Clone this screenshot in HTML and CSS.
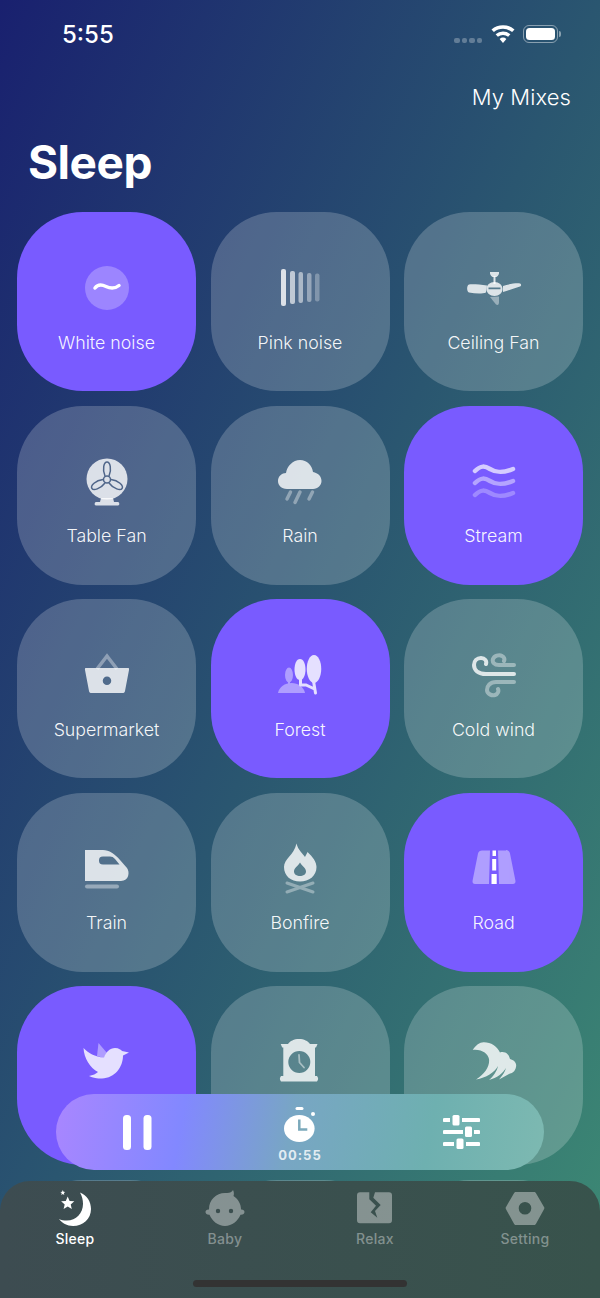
FILE: index.html
```html
<!DOCTYPE html>
<html>
<head>
    <title>Sleep</title>
    <link rel="stylesheet" href="styles.css">
</head>
<body>
    <div class="screen">
        <div class="status">
            <span class="time">5:55</span>
            <div class="status-icons">
                <div class="signal"><i></i><i></i><i></i><i></i></div>
                <svg class="wifi" viewBox="0 0 24 18"><path d="M12 18l-3.4-4.1a5.4 5.4 0 0 1 6.8 0zM6.900 11.800L4.600 9.200a11.600 11.600 0 0 1 14.800 0l-2.300 2.600a8 8 0 0 0-10.200 0zM2.900 7.100L.5 4.400a17.800 17.800 0 0 1 23 0l-2.400 2.700a14.200 14.200 0 0 0-18.200 0z"/></svg>
                <div class="battery"><div class="battery-fill"></div></div>
                <div class="battery-nub"></div>
            </div>
        </div>

        <div class="mixes">My Mixes</div>
        <h1>Sleep</h1>

        <div class="grid">
            <div class="tile on">
                <svg class="icon" viewBox="0 0 44 44"><circle class="disc" cx="22" cy="22" r="22"/><path class="wave-line" d="M10 22c3-4 7-3.500 11-1.500s8 3 13-1"/></svg>
                <span>White noise</span>
            </div>
            <div class="tile">
                <svg class="icon" viewBox="0 0 44 44"><rect x="3" y="3" width="5" height="37" rx="2"/><rect x="12" y="5" width="5" height="33" rx="2" opacity=".8"/><rect x="20.500" y="6" width="4.500" height="31" rx="2" opacity=".65"/><rect x="29" y="7" width="4.500" height="29" rx="2" opacity=".5"/><rect x="37" y="7.500" width="4.500" height="28" rx="2" opacity=".35"/></svg>
                <span>Pink noise</span>
            </div>
            <div class="tile">
                <svg class="icon" viewBox="0 0 44 44"><path d="M18 6h9v1.500c0 1.500-2 3-2.500 3.500h-4C20 10.500 18 9 18 7.500z"/><rect x="21.500" y="10" width="2" height="8"/><path fill-rule="evenodd" d="M22.500 16c4.500 0 8 3 8 7s-3.500 7-8 7-8-3-8-7 3.500-7 8-7zM16.500 21.500v1.800h12v-1.800z"/><path d="M15 19.500C8 18.500 0 18-3 18.500c-2.500 1-2.500 7 0 8 6 1 13 1.500 17 0zM31 20c6-2 13-3 17-2.500 1.500.5 1.500 2.500 0 3-6 1.500-12 4.500-17 5.500z"/><path class="dim" d="M18 31c2 2.500 4 5 6 7.500 2 1 3 0 3-2.500v-5.500z"/></svg>
                <span>Ceiling Fan</span>
            </div>

            <div class="tile">
                <svg class="icon" viewBox="0 0 44 44"><ellipse cx="22" cy="19" rx="20.500" ry="20.500"/><path d="M16 38h12l1 4h4c1.500 0 2 3.500 0 3.500H11c-2 0-1.500-3.500 0-3.500h4z"/><g class="blades"><path d="M20 16c-3-7-1-14 2-14s5 7 2 14"/><path d="M20 16c-3-7-1-14 2-14s5 7 2 14" transform="rotate(120 22 19.500)"/><path d="M20 16c-3-7-1-14 2-14s5 7 2 14" transform="rotate(240 22 19.500)"/><circle cx="22" cy="19.500" r="3.500"/></g></svg>
                <span>Table Fan</span>
            </div>
            <div class="tile">
                <svg class="icon" viewBox="0 0 44 44"><path d="M9 29c-6 0-9-4-9-8 0-5 4-8 8-8 1-7 7-13 14-13s12 5 13 12c5 1 8.500 4 8.500 9 0 4-3.500 8-8.500 8z"/><path class="drops" d="M12.500 32L9 39M22 32l-5 10.500M34.500 32L31 39"/></svg>
                <span>Rain</span>
            </div>
            <div class="tile on">
                <svg class="icon" viewBox="0 0 44 44"><path class="swell" d="M3 11c6-6 10-5 15-2s11 5 23 0"/><path class="swell mid" d="M3 23c6-6 10-5 15-2s11 5 23 0"/><path class="swell low" d="M3 35c6-6 10-5 15-2s11 5 23 0"/></svg>
                <span>Stream</span>
            </div>

            <div class="tile">
                <svg class="icon" viewBox="0 0 44 44"><path class="handle" d="M12 16l10-13 10 13"/><path fill-rule="evenodd" d="M1 15h42c1 0 1.200.5 1 2l-4 21c-.3 1.400-1 2-2.500 2h-31C5 40 4.300 39.400 4 38L0 17c-.2-1.500 0-2 1-2zM22 23.500a4 4 0 1 0 0 8.500 4 4 0 0 0 0-8.500z"/></svg>
                <span>Supermarket</span>
            </div>
            <div class="tile on">
                <svg class="icon" viewBox="0 0 44 44"><g class="dim"><ellipse cx="11" cy="22" rx="4" ry="7.500"/><rect x="10" y="28" width="2" height="4"/><path d="M0 40c1-6 7-10 13.500-10S26 34 27 40z"/></g><path d="M36 2c4.500 0 7.250 7 7.250 14S40 30 36 30s-7.250-7-7.250-14S31.500 2 36 2z"/><path d="M22 6c3.500 0 5.500 5 5.500 10.500S25.500 27 22 27s-5.500-5-5.500-10.500S18.500 6 22 6z"/><path class="trunk" d="M35.500 28l2 12M36.500 36L28 32l-5.500 0M22.500 26v6"/></svg>
                <span>Forest</span>
            </div>
            <div class="tile">
                <svg class="icon" viewBox="0 0 44 44"><path class="gust" d="M42 21H14C6 21 2 17 2 12c0-4 3-7 7-7s6 3 5 6"/><path class="gust dimline" d="M42 12H27c-5 0-7-3-6-6s6-5 9-3c2 1 3 3 2 5"/><path class="gust dimline" d="M42 29H24c-6 0-9 4-9 8s5 6 8 5 4-4 3-6"/></svg>
                <span>Cold wind</span>
            </div>

            <div class="tile">
                <svg class="icon" viewBox="0 0 44 44"><path fill-rule="evenodd" d="M0 3h18c6 0 12 4 17 10l7 8c3 4 2 13-6 13H0zM18 9.500c-3 0-4 1.500-4 4s1 4 4 4h16.500L30 12c-1.500-1.700-3-2.500-5-2.500z"/><rect class="dim" y="37.500" width="34" height="4" rx="2"/></svg>
                <span>Train</span>
            </div>
            <div class="tile">
                <svg class="icon" viewBox="0 0 44 44"><path fill-rule="evenodd" d="M18.500-3.500C20 3 25 7 27 10c1-2 2-4 2.500-5C35 10 38.500 15 38.500 20c0 9-7.500 14.500-16.500 14.500S6 29 6 20C6 12 16 8 18.500-3.500zM22 15.500c-2 3.500-6 5.500-6 9 0 3 3 4.500 6 4.500s6-1.500 6-4.500c0-3.500-4-5.500-6-9z"/><path class="logs" d="M9 36l26 9M35 36L9 45"/></svg>
                <span>Bonfire</span>
            </div>
            <div class="tile on">
                <svg class="icon" viewBox="0 0 44 44"><g class="dim"><path d="M10 3.500h8l-1 33.500H3C1 37 .2 35.500.6 33.500L6 6.500C6.500 4.500 8 3.500 10 3.500z"/><path d="M34 3.500h-8l1 33.500h14c2 0 2.800-1.500 2.400-3.500L38 6.500c-.5-2-2-3.500-4-3.500z"/></g><path class="dash" d="M20.500 3.500h3.500V9h-3.500zM20.200 12h4v11.500h-4zM19.500 27h5.200v10h-5.200z"/></svg>
                <span>Road</span>
            </div>

            <div class="tile on">
                <svg class="icon" viewBox="0 0 44 44"><path class="dim" d="M13.500 3L22 13l-3 5-7-2z"/><path d="M-1.500 8C3 13 10 17 19 17.500 21 12 25 8 30 8c4 0 6 2 7 3l7 1.500-6 3c0 11.500-8 22.500-21 23-5 0-9-.5-13-2.500 4-1 7-2 9-4C5 28-1 18-1.500 8z"/></svg>
                <span>Birds</span>
            </div>
            <div class="tile">
                <svg class="icon" viewBox="0 0 44 44"><path fill-rule="evenodd" d="M21-1c5 0 9 2 11 5h7.500L38 7.500h-1V36h2c1.500 2 1.500 3.500 0 5.500H3c-1.500-2-1.500-3.500 0-5.500h2.300V7.500H4.200L2.700 4H10c2-3 6-5 11-5zM21.300 11a11 11 0 1 0 0 22 11 11 0 0 0 0-22z"/><path class="hand" d="M21 15l.5 7.500 4.500 5"/></svg>
                <span>Clock</span>
            </div>
            <div class="tile">
                <svg class="icon" viewBox="0 0 44 44"><path d="M.7 10C4 5 8 2 12 2.300c7 .2 13 3.700 16 10.200 5-1.500 9 1.500 10 6.500 4 1 7 4 6 8-1 5-4 6-7 7l-10 5.500c3-3.500 6-7.500 7-11.500-3 5-9 10-17 12 4-3 8-9 9-14-3 6-12 12-22 13.500C13 34 18 26 17 19 16 14 10 9 .7 10z"/></svg>
                <span>Waves</span>
            </div>

            <div class="tile"></div>
            <div class="tile"></div>
            <div class="tile"></div>
        </div>

        <div class="player">
            <svg class="pause" viewBox="0 0 29 35"><rect width="8" height="35" rx="3.500"/><rect x="20.500" width="8" height="35" rx="3.500"/></svg>
            <div class="timer">
                <svg class="timer-icon" viewBox="0 0 36 36"><rect x="13.500" y="0" width="8" height="3" rx="1.500"/><circle cx="31" cy="7" r="2"/><ellipse cx="17.300" cy="21.500" rx="15.300" ry="13.500"/><path class="timer-hand" d="M17.300 12.500v10h8"/></svg>
                <span>00:55</span>
            </div>
            <svg class="sliders" viewBox="0 0 37 34"><path d="M1.500 3H7v4H1.500a2 2 0 0 1 0-4zM19 3h16.500a2 2 0 0 1 0 4H19zM1.500 15H20v4H1.500a2 2 0 0 1 0-4zM31 15h4.500a2 2 0 0 1 0 4H31zM1.500 27H11v4H1.500a2 2 0 0 1 0-4zM23 27h12.500a2 2 0 0 1 0 4H23z"/><rect x="9.500" y="0" width="7" height="10.500" rx="1.500"/><rect x="22" y="11.500" width="7" height="10.500" rx="1.500"/><rect x="13.500" y="23.500" width="7" height="10.500" rx="1.500"/></svg>
        </div>

        <div class="tabbar">
            <div class="tabs">
                <div class="tab active">
                    <svg class="tab-icon" viewBox="0 0 44 38"><path d="M27 2.500C34 5 38 12 38 19c0 10-8 17-18 17-6 0-11-3-14-7 2 1 5 1.500 8 1.500 9 0 16-7.500 16-16.500 0-4-1-8-3-11.500z"/><path d="M14.700 6.500l1.900 4.400 4.700.4-3.600 3.100 1.100 4.600-4.100-2.400-4.100 2.400 1.100-4.600-3.600-3.100 4.700-.4zM9.800 0l.7 1.700 1.800.2-1.400 1.200.4 1.800-1.500-1-1.500 1 .4-1.800L7.300 1.900l1.800-.2z"/></svg>
                    <span>Sleep</span>
                </div>
                <div class="tab">
                    <svg class="tab-icon" viewBox="0 0 44 38"><path fill-rule="evenodd" d="M24 3c3 0 5-1 6-3 1 2 1.200 4 .5 6C35 9 38 14 38 19v.5c2-.3 3.500 1 3.500 2.500s-1.500 3-4 2.800C35 31 29 36 22 36S9 31 6.500 24.800c-2.500.2-4-1.300-4-2.800s1.500-2.800 3.500-2.500V19C6 10 13 3 22 3zM15 18.800a2.200 2.200 0 1 0 0 4.400 2.200 2.200 0 0 0 0-4.400zM28 18.800a2.200 2.200 0 1 0 0 4.400 2.200 2.200 0 0 0 0-4.400z"/></svg>
                    <span>Baby</span>
                </div>
                <div class="tab">
                    <svg class="tab-icon" viewBox="0 0 44 38"><path fill-rule="evenodd" d="M7 2.300h9.300L16.300 9.300 23 15.700 17.700 22.300 24.300 27.700 22 21 27.700 15 20.300 7.700 22 2.300H36c2 0 3 1 3 3v25c0 2-1 3-3 3H7c-2 0-3-1-3-3v-25c0-2 1-3 3-3z"/></svg>
                    <span>Relax</span>
                </div>
                <div class="tab">
                    <svg class="tab-icon" viewBox="0 0 44 38"><path fill-rule="evenodd" d="M13 2h18c1 0 1.500.4 2 1.200l8 13.800c.5.800.5 1.400 0 2.200l-8 14.600c-.5.800-1 1.200-2 1.200H13c-1 0-1.500-.4-2-1.200L3 19.200c-.5-.8-.5-1.400 0-2.200l8-13.800C11.500 2.400 12 2 13 2zM22 12a6.300 6.300 0 1 0 0 12.600A6.300 6.300 0 0 0 22 12z"/></svg>
                    <span>Setting</span>
                </div>
            </div>
            <div class="home-bar"></div>
        </div>
    </div>
</body>
</html>
```

FILE: styles.css
```css
body {
    margin: 0;
    padding: 0;
}

.screen {
    position: relative;
    width: 600px;
    height: 1298px;
    overflow: hidden;
    font-family: Inter, "Noto Sans", sans-serif;
    color: white;
    background: linear-gradient(to bottom right, #19206f 0%, #2a5670 50%, #3d8a74 100%);
}

.status {
    display: flex;
    justify-content: space-between;
    height: 82px;
    padding: 0 39px 0 62px;
}

.time {
    margin-top: 20px;
    font-size: 24px;
    line-height: 30px;
    font-weight: 500;
}

.status-icons {
    display: flex;
    align-items: flex-start;
    padding-top: 25px;
}

.signal {
    display: flex;
    gap: 2px;
    margin: 13px 9px 0 0;
}

.signal i {
    width: 5.500px;
    height: 5px;
    border-radius: 2px;
    background: rgba(255,255,255,0.28);
}

.wifi {
    width: 24px;
    height: 18px;
    margin-right: 8px;
    fill: white;
}

.battery {
    width: 35px;
    height: 18px;
    box-sizing: border-box;
    padding: 2px;
    border: 1px solid rgba(255,255,255,0.45);
    border-radius: 6px;
}

.battery-fill {
    height: 100%;
    border-radius: 3.500px;
    background: white;
}

.battery-nub {
    width: 2px;
    height: 6px;
    margin: 6px 0 0 1px;
    border-radius: 0 2px 2px 0;
    background: rgba(255,255,255,0.45);
}

.mixes {
    padding-right: 29px;
    text-align: right;
    font-size: 22px;
    line-height: 30px;
    font-weight: 300;
    letter-spacing: 0.1px;
}

h1 {
    margin: 22px 0 0 28px;
    font-size: 46px;
    line-height: 56px;
    font-weight: 700;
    letter-spacing: -0.5px;
}

.grid {
    display: grid;
    grid-template-columns: repeat(3, 179px);
    grid-auto-rows: 179px;
    gap: 14.500px;
    margin-top: 22px;
    padding-left: 17px;
}

.tile {
    display: flex;
    flex-direction: column;
    align-items: center;
    padding-top: 54px;
    box-sizing: border-box;
    border-radius: 66px;
    background: rgba(255,255,255,0.2);
    color: rgba(255,255,255,0.8);
}

.tile.on {
    background: #795bff;
}

.tile span {
    margin-top: 20.500px;
    font-size: 17.800px;
    line-height: 24px;
    font-weight: 300;
    color: rgba(255,255,255,0.95);
}

.icon {
    display: block;
    width: 44px;
    height: 44px;
    overflow: visible;
    fill: currentColor;
}

.tile.on .icon {
    color: #e5e0ff;
}

.dim {
    opacity: 0.5;
}

.disc {
    opacity: 0.32;
}

.wave-line {
    fill: none;
    stroke: white;
    stroke-width: 3.500;
    stroke-linecap: round;
}

.blades {
    fill: none;
    stroke: #4f6589;
    stroke-width: 1.500;
}

.drops {
    fill: none;
    stroke: currentColor;
    stroke-width: 3.500;
    stroke-linecap: round;
    opacity: 0.45;
}

.swell {
    fill: none;
    stroke: currentColor;
    stroke-width: 4.500;
    stroke-linecap: round;
    opacity: 0.85;
}

.swell.mid {
    opacity: 0.55;
}

.swell.low {
    opacity: 0.35;
}

.handle {
    fill: none;
    stroke: currentColor;
    stroke-width: 3.500;
    opacity: 0.45;
}

.trunk {
    fill: none;
    stroke: currentColor;
    stroke-width: 3;
    stroke-linecap: round;
}

.gust {
    fill: none;
    stroke: currentColor;
    stroke-width: 4;
    stroke-linecap: round;
}

.dimline {
    opacity: 0.5;
}

.logs {
    fill: none;
    stroke: currentColor;
    stroke-width: 3;
    stroke-linecap: round;
    opacity: 0.45;
}

.dash {
    fill: white;
}

.hand {
    fill: none;
    stroke: currentColor;
    stroke-width: 1.800;
    stroke-linecap: round;
    opacity: 0.6;
}

/* floats over the grid */
.player {
    position: absolute;
    left: 56px;
    top: 1094px;
    display: grid;
    grid-template-columns: 163px 162px 161px;
    justify-items: center;
    align-items: center;
    width: 488px;
    height: 76px;
    border-radius: 38px;
    background: linear-gradient(100deg, #a986ff 0%, #8288ff 26%, #78a6c4 48%, #6eb0b0 76%, #7db9b1 100%);
}

.pause {
    width: 29px;
    height: 35px;
    fill: white;
}

.timer {
    display: flex;
    flex-direction: column;
    align-items: center;
}

.timer-icon {
    width: 36px;
    height: 36px;
    margin-top: 5px;
    fill: white;
}

.timer-hand {
    fill: none;
    stroke: #7ba9bb;
    stroke-width: 2.500;
}

.timer span {
    margin-top: 4px;
    font-size: 13px;
    line-height: 16px;
    font-weight: 700;
    letter-spacing: 1px;
    color: rgba(255,255,255,0.8);
}

.sliders {
    width: 37px;
    height: 34px;
    fill: white;
}

.tabbar {
    position: absolute;
    left: 0;
    top: 1181px;
    width: 600px;
    height: 117px;
    border-radius: 30px 30px 0 0;
    background: linear-gradient(90deg, #3d4c51, #38534c);
}

.tabs {
    display: grid;
    grid-template-columns: repeat(4, 150px);
}

.tab {
    display: flex;
    flex-direction: column;
    align-items: center;
    padding-top: 9px;
    font-size: 14px;
    line-height: 18px;
    font-weight: 500;
    letter-spacing: 0.3px;
    color: rgba(255,255,255,0.38);
}

.tab.active {
    color: white;
}

.tab-icon {
    display: block;
    width: 44px;
    height: 38px;
    margin-bottom: 2px;
    fill: currentColor;
}

.home-bar {
    width: 214px;
    height: 7px;
    margin: 32px auto 0;
    border-radius: 4px;
    background: #333;
}
```
